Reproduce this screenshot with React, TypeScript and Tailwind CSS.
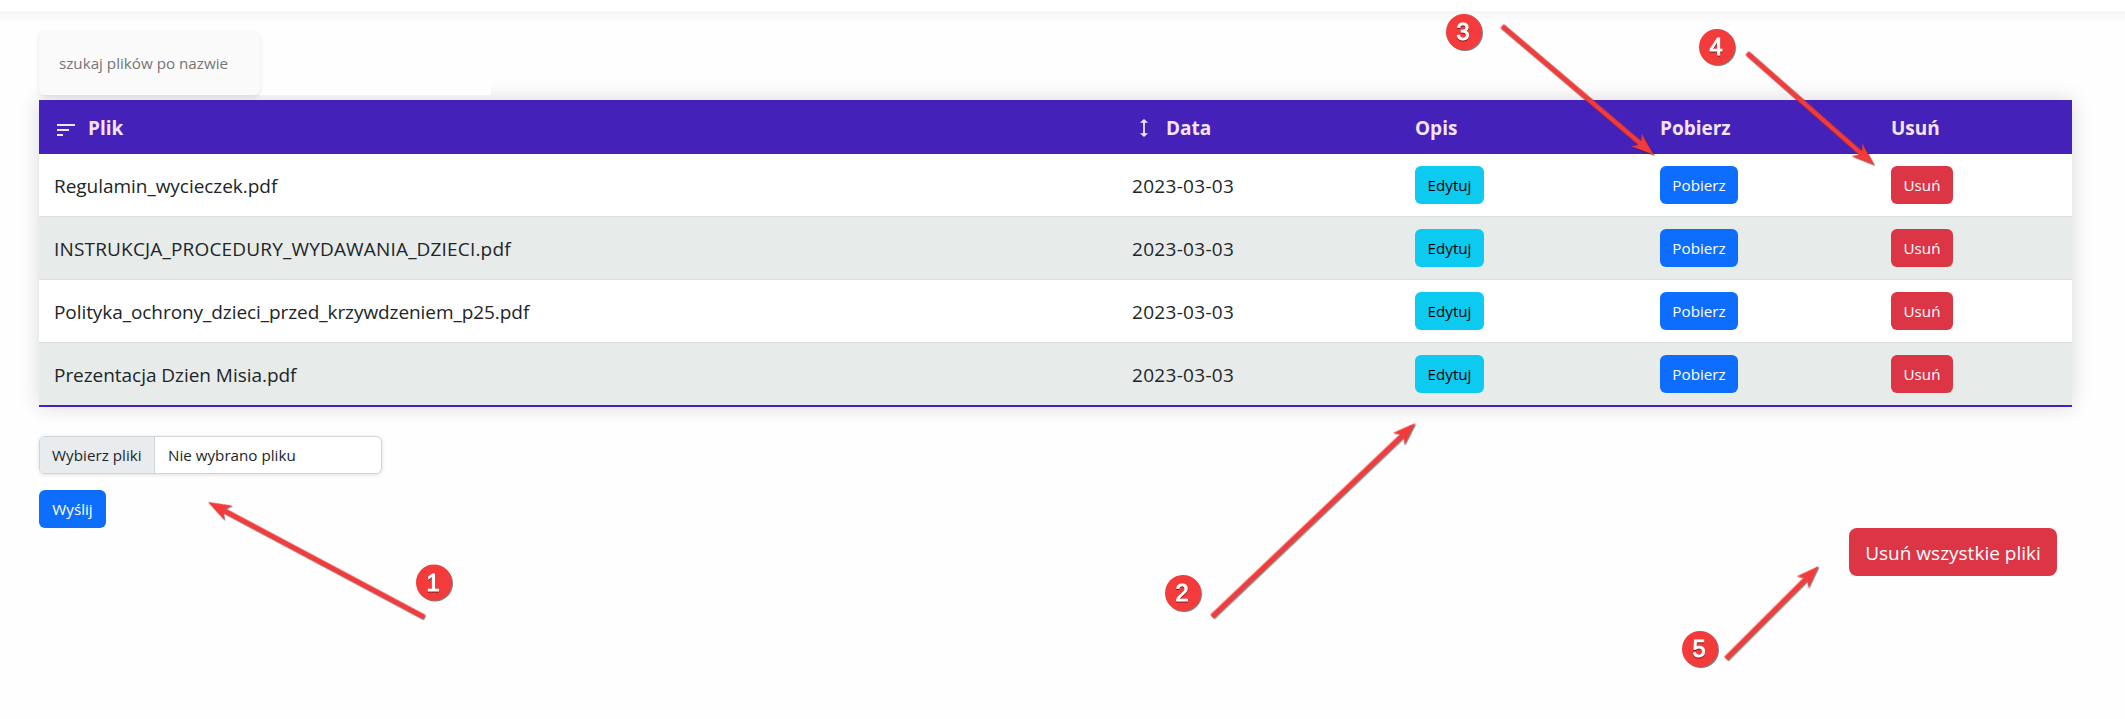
const files = [
  { name: "Regulamin_wycieczek.pdf", date: "2023-03-03", tracking: "tracking-[-0.04px]" },
  { name: "INSTRUKCJA_PROCEDURY_WYDAWANIA_DZIECI.pdf", date: "2023-03-03", tracking: "tracking-[0.17px]" },
  { name: "Polityka_ochrony_dzieci_przed_krzywdzeniem_p25.pdf", date: "2023-03-03", tracking: "tracking-[-0.07px]" },
  { name: "Prezentacja Dzien Misia.pdf", date: "2023-03-03", tracking: "tracking-[-0.04px]" },
];

const arrows = [
  { n: 1, from: [424, 617], to: [208, 502], badge: [434, 582.5] },
  { n: 2, from: [1212, 616.5], to: [1415.3, 423], badge: [1183, 593] },
  { n: 3, from: [1502, 26], to: [1654, 155], badge: [1464, 32] },
  { n: 4, from: [1747, 53], to: [1874.3, 165], badge: [1717, 47] },
  { n: 5, from: [1726, 658.5], to: [1818.7, 566], badge: [1700, 649] },
];

const columns = "grid grid-cols-[1079px_282px_245px_231px_196px] items-center";

function SortIcon() {
  return (
    <svg width="18" height="12" viewBox="0 0 18 12" fill="currentColor" shapeRendering="crispEdges">
      <path d="M0 0h18v2H0zM0 5h12v2H0zM0 10h6v2H0z" />
    </svg>
  );
}

function UpDownIcon() {
  return (
    <svg width="8" height="18" viewBox="0 0 8 18" fill="currentColor">
      <path d="M4 0 8 3.8H4.9v10.4H8L4 18 0 14.2h3.1V3.8H0z" />
    </svg>
  );
}

function Button({ label, color }: { label: string; color: string }) {
  return (
    <button className={`flex h-[38px] items-center justify-center rounded-md pt-px text-[15.2px] ${color}`}>
      {label}
    </button>
  );
}

function Arrow({ from, to }: { from: number[]; to: number[] }) {
  const dx = to[0] - from[0];
  const dy = to[1] - from[1];
  const length = Math.hypot(dx, dy);
  const angle = (Math.atan2(dy, dx) * 180) / Math.PI;
  return (
    <g transform={`translate(${to[0]} ${to[1]}) rotate(${angle})`}>
      <path d={`M0 0 L-23 -8.2 L-18.5 -2.4 H${-length} V2.4 H-18.5 L-23 8.2 Z`} />
    </g>
  );
}

export default function App() {
  return (
    <div className="relative h-[719px] w-[2125px] overflow-hidden bg-[#fefefe] font-['Open_Sans','Noto_Sans',sans-serif] text-[#212529]">
      <div className="h-[11px] bg-white" />
      <div className="h-[13px] bg-linear-to-b from-[#f6f6f6] to-[#fefefe]" />
      <main className="pt-[7px] pl-[39px]">
        <div className="relative z-10 h-16 w-[452px] bg-[#fefefe]">
          <div className="flex h-16 w-[221px] items-center rounded-md bg-[#fafafa] pl-5 shadow-[0_2px_4px_rgba(0,0,0,0.1)]">
            <input
              className="w-48 bg-transparent pt-px text-[15.2px] outline-none placeholder:text-[#757575]"
              placeholder="szukaj plików po nazwie"
            />
          </div>
        </div>
        <section className="mt-[5px] w-[2033px] border-b-2 border-[#4422b9] shadow-[0_0_20px_rgba(0,0,0,0.15)]">
          <header className={`${columns} h-[54px] bg-[#4422b9] pt-[2px] text-[19px] font-bold text-[#f6e3f9]`}>
            <div className="flex items-center pl-[18px]">
              <span className="mt-1"><SortIcon /></span>
              <span className="ml-[13px]">Plik</span>
            </div>
            <div className="flex items-center pl-[22px]">
              <UpDownIcon />
              <span className="ml-[18px]">Data</span>
            </div>
            <div className="pl-[15px]">Opis</div>
            <div className="pl-[15px]">Pobierz</div>
            <div className="pl-[15px]">Usuń</div>
          </header>
          {files.map((file, i) => (
            <div
              key={file.name}
              className={`${columns} border-[#d9dddc] ${i % 2 ? "bg-[#e7ebea]" : "bg-white"} ${
                i < files.length - 1 ? "h-[63px] border-b" : "h-[62px]"
              }`}
            >
              <div className={`pt-0.5 pl-[15px] text-[19px] ${file.tracking}`}>{file.name}</div>
              <div className="pt-0.5 pl-[14px] text-[19px] tracking-[0.3px]">{file.date}</div>
              <div className="pl-[15px]"><Button label="Edytuj" color="w-[69px] bg-[#0dcaf0] text-black" /></div>
              <div className="pl-[15px]"><Button label="Pobierz" color="w-[78px] bg-[#0d6efd] text-white" /></div>
              <div className="pl-[15px]"><Button label="Usuń" color="w-[62px] bg-[#dc3545] text-white" /></div>
            </div>
          ))}
        </section>
        <div className="mt-[29px] flex h-[38px] w-[343px] overflow-hidden rounded-md border border-[#ced4da] bg-white text-[15.2px] shadow-[0_1px_4px_rgba(0,0,0,0.12)]">
          <div className="flex w-[115px] items-center border-r border-[#ced4da] bg-[#e9ecef] pt-px pl-3 tracking-[0.03px]">Wybierz pliki</div>
          <div className="flex items-center pt-px pl-[13px]">Nie wybrano pliku</div>
        </div>
        <div className="mt-4 flex">
          <Button label="Wyślij" color="w-[67px] bg-[#0d6efd] text-white" />
        </div>
        <div className="flex justify-end pr-[68px]">
          <button className="h-12 w-[208px] rounded-lg bg-[#dc3545] pt-0.5 text-[19px] text-white">Usuń wszystkie pliki</button>
        </div>
      </main>

      <svg
        className="pointer-events-none absolute inset-0 z-20"
        width="2125"
        height="719"
        viewBox="0 0 2125 719"
        fill="#f33b3b"
      >
        <g className="drop-shadow-[1px_1px_0.6px_rgba(0,0,0,0.5)]">
          {arrows.map((a) => (
            <Arrow key={a.n} from={a.from} to={a.to} />
          ))}
          {arrows.map((a) => (
            <circle key={a.n} cx={a.badge[0]} cy={a.badge[1]} r="18" />
          ))}
        </g>
        <g
          className="font-['Liberation_Sans',sans-serif] text-[23.5px] drop-shadow-[0_1px_0.5px_rgba(0,0,0,0.5)]"
          fill="#fff"
          stroke="#fff"
          strokeWidth="1"
          textAnchor="middle"
        >
          {arrows.map((a) => (
            <text key={a.n} x={a.badge[0] - 1} y={a.badge[1] + 8}>
              {a.n}
            </text>
          ))}
        </g>
      </svg>
    </div>
  );
}
